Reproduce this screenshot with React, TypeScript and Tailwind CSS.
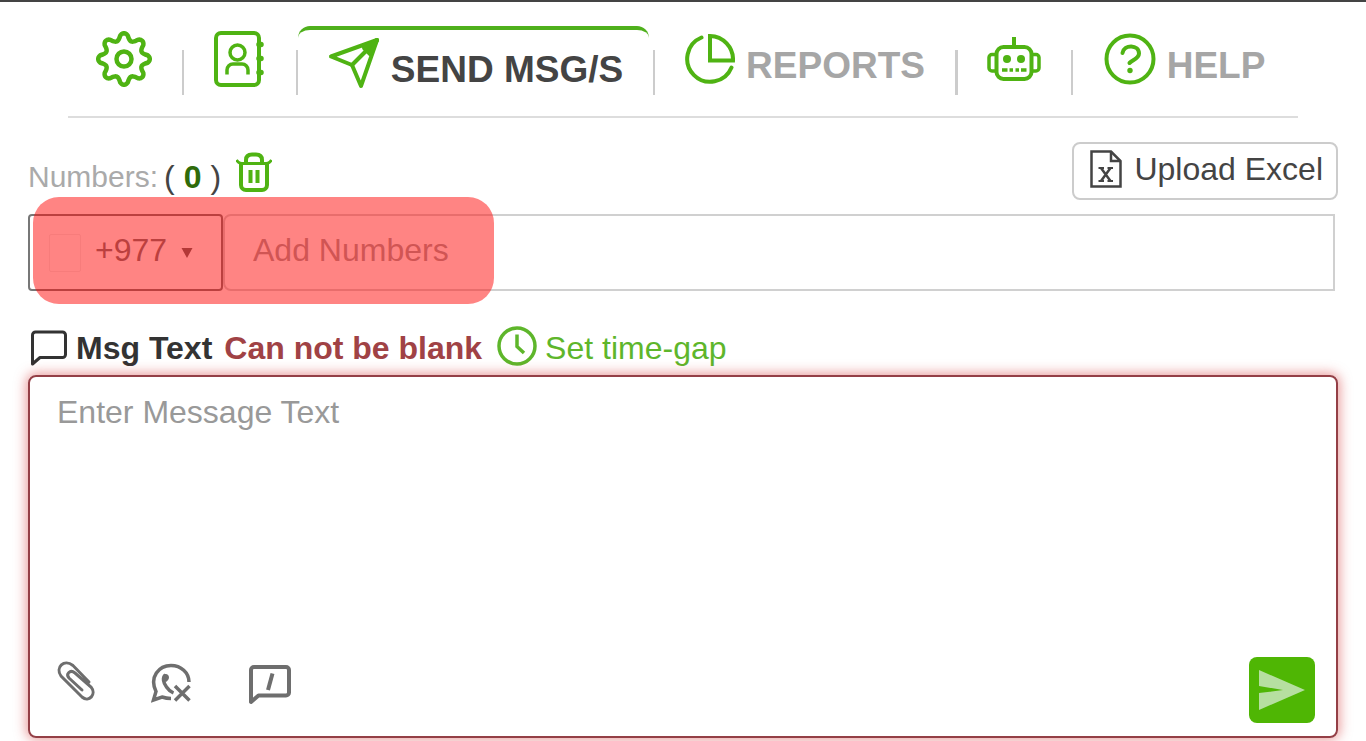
import { useState } from 'react';
import type { ReactNode } from 'react';

// eight rounded teeth around the centre of a 56x56 box
const gearPath = (() => {
  const points: string[] = [];
  for (let deg = 0; deg < 360; deg += 3) {
    const a = (deg * Math.PI) / 180;
    const wave = Math.cos(8 * a);
    const r = 22.4 + 3.4 * Math.sign(wave) * Math.pow(Math.abs(wave), 0.7);
    points.push(`${(28 + r * Math.sin(a)).toFixed(2)} ${(28 - r * Math.cos(a)).toFixed(2)}`);
  }
  return `M${points.join('L')}Z`;
})();

function GearIcon() {
  return (
    <svg className="h-14 w-14" viewBox="0 0 56 56" fill="none" stroke="currentColor" strokeWidth="4.5" strokeLinejoin="round">
      <path d={gearPath} />
      <circle cx="28" cy="28" r="7.5" />
    </svg>
  );
}

function ContactsIcon() {
  return (
    <svg className="h-14 w-[50px]" viewBox="0 0 50 56" fill="none" stroke="currentColor" strokeWidth="4">
      <rect x="2" y="2" width="43" height="52" rx="5" />
      <circle cx="23.500" cy="21.500" r="7.5" strokeWidth="3.5" />
      <path d="M13 43.500V39a6 6 0 0 1 6-6h9a6 6 0 0 1 6 6v4.500" strokeWidth="3.5" />
      <path d="M45 13.500h2M45 27.500h2M45 41.500h2" strokeWidth="5.500" strokeLinecap="round" />
    </svg>
  );
}

function PlaneIcon() {
  return (
    <svg className="h-[52px] w-[52px]" viewBox="0 0 52 52" fill="none" stroke="currentColor" strokeWidth="4" strokeLinejoin="round" strokeLinecap="round">
      <path d="M49 3L3 19.500L24 28L33 49Z" />
      <path d="M49 3L24 28" />
      <path d="M49 3L36 11L42 17Z" fill="currentColor" />
    </svg>
  );
}

function ReportsIcon() {
  return (
    <svg className="h-[52px] w-[52px]" viewBox="0 0 52 52" fill="none" stroke="currentColor" strokeWidth="4" strokeLinecap="round">
      <path d="M18.500 4.500A23 23 0 1 0 48.500 34.500" />
      <path d="M27 3A23.500 23.500 0 0 1 50 27.500H27Z" strokeLinejoin="miter" />
    </svg>
  );
}

function RobotIcon() {
  return (
    <svg className="h-[46px] w-[54px]" viewBox="0 0 54 46" fill="none" stroke="currentColor" strokeWidth="4">
      <path d="M27 1v9" strokeWidth="4" />
      <rect x="9.500" y="11" width="35" height="32" rx="7" />
      <path d="M9 18.500H5a3 3 0 0 0-3 3V32a3 3 0 0 0 3 3h4M45 18.500h4a3 3 0 0 1 3 3V32a3 3 0 0 1-3 3h-4" strokeWidth="3.5" />
      <g fill="currentColor" stroke="none">
        <circle cx="20" cy="23" r="4" />
        <circle cx="34" cy="23" r="4" />
      </g>
      <path d="M15 34h5.500M22.500 34h3.500M28.500 34h3.500M34 34h5.500" strokeWidth="3.500" />
    </svg>
  );
}

function HelpIcon() {
  return (
    <svg className="h-[52px] w-[52px]" viewBox="0 0 52 52" fill="none" stroke="currentColor" strokeWidth="4">
      <circle cx="26" cy="26" r="23.500" />
      <path d="M18.500 20C20 11 35 11.500 35 20.500C35 25.500 29 26.500 25.500 30" strokeLinecap="round" />
      <circle cx="26" cy="37.500" r="2.700" fill="currentColor" stroke="none" />
    </svg>
  );
}

function TrashIcon() {
  return (
    <svg className="h-10 w-9" viewBox="0 0 36 40" fill="none" stroke="currentColor" strokeWidth="4">
      <path d="M0.500 8C3 11.500 5 11.500 8 11.500H28C31 11.500 33 11.500 35.500 8" strokeWidth="3" />
      <path d="M10 10V8C10 4 12.500 2.500 16 2.500H20C23.500 2.500 26 4 26 8V10" />
      <path d="M5 12v21a5 5 0 0 0 5 5h16a5 5 0 0 0 5-5V12" />
      <path d="M14.500 18v13M21.500 18v13" strokeWidth="4" />
    </svg>
  );
}

function ExcelIcon() {
  return (
    <svg className="h-[38px] w-8" viewBox="0 0 32 38" fill="none" stroke="currentColor" strokeWidth="2.500">
      <path d="M1.500 1.500H21L30.500 11V36.500H1.500Z" />
      <path d="M21 1.500V11H30.500" />
      <path d="M11 18L20.500 31M20.500 18L11 31" strokeWidth="2.500" />
      <path d="M8.500 18h5.500M17.500 18h5.500M8.500 31h5.500M17.500 31h5.500" strokeWidth="2" />
    </svg>
  );
}

function BubbleIcon() {
  return (
    <svg className="h-9 w-9" viewBox="0 0 36 36" fill="none" stroke="currentColor" strokeWidth="3" strokeLinejoin="round">
      <path d="M1.500 34V5a3 3 0 0 1 3-3h27a3 3 0 0 1 3 3v19.500a3 3 0 0 1-3 3H9Z" />
    </svg>
  );
}

function ClockIcon() {
  return (
    <svg className="h-10 w-10" viewBox="0 0 40 40" fill="none" stroke="currentColor" strokeWidth="3.500">
      <circle cx="20" cy="20" r="18" />
      <path d="M20 8.500V20.500L27 27" />
    </svg>
  );
}

function ClipIcon() {
  return (
    <svg className="h-10 w-[38px]" viewBox="0 0 38 40" fill="none" stroke="currentColor" strokeWidth="3" strokeLinecap="round">
      <path d="M32 21L16 4.500C7 -2.500 -2 6.500 4 15L25 36C32 42 40 33 34 26L18 12C13 8 8.500 13 12 17L25 29" />
    </svg>
  );
}

function WhatsappOffIcon() {
  return (
    <svg className="h-10 w-10" viewBox="0 0 40 40" fill="none" stroke="currentColor" strokeWidth="3.500">
      <path d="M20 35.500C16.500 35.500 14 35 11 34L2.500 37L5 28.500C-2 14 8 2.500 20 2.500C30 2.500 38 9.500 38 19" />
      <path d="M14.500 12C11 14.500 12.500 20 15.500 24C17.500 27 20 29 22.500 30" />
      <path d="M12.500 12.500C14 9.500 18 11 18 14.500C18 16 16.500 18 15 19L12.500 18Z" fill="currentColor" stroke="none" />
      <path d="M24 23L38.500 37.500M38.500 23L24 37.500" />
    </svg>
  );
}

function CommandIcon() {
  return (
    <svg className="h-10 w-[42px]" viewBox="0 0 42 40" fill="none" stroke="currentColor" strokeWidth="4" strokeLinejoin="round">
      <path d="M2 37V5a3 3 0 0 1 3-3h32a3 3 0 0 1 3 3v22.500a3 3 0 0 1-3 3H9.500Z" />
      <path d="M23.500 8.500L19 25" />
    </svg>
  );
}

const tabs: { id: string; name: string; icon: ReactNode; label?: string }[] = [
  { id: 'settings', name: 'Settings', icon: <GearIcon /> },
  { id: 'contacts', name: 'Contacts', icon: <ContactsIcon /> },
  { id: 'send', name: 'Send messages', icon: <PlaneIcon />, label: 'SEND MSG/S' },
  { id: 'reports', name: 'Reports', icon: <ReportsIcon />, label: 'REPORTS' },
  { id: 'bot', name: 'Bot', icon: <RobotIcon /> },
  { id: 'help', name: 'Help', icon: <HelpIcon />, label: 'HELP' },
];

function NavTabs() {
  const [active, setActive] = useState('send');

  return (
    <nav className="mx-[68px] border-b-2 border-[#dddddd] pt-6 pb-[21px]">
      <ul className="grid grid-cols-[116fr_114fr_357fr_303fr_115fr_225fr]">
        {tabs.map((tab, i) => (
          <li key={tab.id} className="flex h-[69px] items-end">
            <a
              href={`#${tab.id}`}
              aria-label={tab.name}
              onClick={() => setActive(tab.id)}
              className={`flex h-full flex-1 items-start justify-center gap-[11px] pt-[5px] ${
                active === tab.id ? 'mr-1 rounded-t-xl border-t-4 border-[#4fb01c] pl-1 text-[#444444]' : 'pr-[2px] text-[#a6a6a6]'
              }`}
            >
              <span className="flex h-14 items-center text-[#4fb313]">{tab.icon}</span>
              {tab.label && <span className="mt-[7px] text-[37px] leading-[56px] font-bold whitespace-nowrap">{tab.label}</span>}
            </a>
            {i < tabs.length - 1 && (
              <span className={`h-[45px] bg-[#cccccc] ${tab.id === 'reports' ? 'w-[3px]' : 'w-[2px]'}`} />
            )}
          </li>
        ))}
      </ul>
    </nav>
  );
}

export default function App() {
  const [numbers, setNumbers] = useState('');
  const [message, setMessage] = useState('');
  const [code, setCode] = useState('+977');

  return (
    <div className="flex min-h-screen flex-col border-t-2 border-[#444444] bg-white font-['Liberation_Sans',Arial,sans-serif]">
      <NavTabs />

      <main className="flex flex-1 flex-col px-7 pt-6 pb-[3px]">
        <div className="flex items-center justify-between">
          <div className="flex items-center">
            <label htmlFor="numbers" className="mt-3 text-[30px] leading-10 text-[#aaaaaa]">Numbers:</label>
            <p className="mt-3 ml-[6px] flex gap-[9px] text-[32px] leading-10 text-[#444444]">
              <span>(</span>
              <b className="text-[#2f6b0a]">0</b>
              <span>)</span>
            </p>
            <button type="button" aria-label="Clear numbers" className="mt-[2px] ml-[15px] text-[#4fb313]">
              <TrashIcon />
            </button>
          </div>
          <button
            type="button"
            className="flex h-[58px] items-center gap-3 rounded-lg border-2 border-[#cccccc] px-4 pr-[13px] pb-1 text-[32px] leading-10 text-[#444444]"
          >
            <ExcelIcon />
            Upload Excel
          </button>
        </div>

        <div className="relative mt-[14px] mr-[3px] flex h-[77px]">
          <div className="flex w-[195px] items-center rounded border-2 border-[#777777] pl-[19px]">
            <span className="h-[38px] w-8 rounded-xs border border-[#eeeeee]" />
            <select
              aria-label="Country code"
              value={code}
              onChange={(e) => setCode(e.target.value)}
              className="ml-[14px] w-[86px] appearance-none bg-transparent pb-[6px] text-[32px] leading-10 text-[#777777] outline-none"
            >
              <option>+977</option>
              <option>+91</option>
              <option>+1</option>
            </select>
            <svg className="h-[10px] w-3 text-[#666666]" viewBox="0 0 12 10" fill="currentColor">
              <path d="M0.500 0H11.500L6 10Z" />
            </svg>
          </div>
          <input
            id="numbers"
            type="text"
            value={numbers}
            onChange={(e) => setNumbers(e.target.value)}
            placeholder="Add Numbers"
            className="min-w-0 flex-1 rounded-l-lg border-2 border-[#d0d0d0] pb-[6px] pl-7 text-[32px] leading-10 outline-none placeholder:text-[#a0a0a0]"
          />
          {/* highlight over the number field */}
          <div className="pointer-events-none absolute -top-[17px] left-[5px] h-[107px] w-[461px] rounded-[26px] bg-[rgba(255,10,8,0.5)]" />
        </div>

        <div className="mt-[34px] flex h-[50px] items-center pb-1 pl-[3px] text-[32px] leading-10 whitespace-nowrap">
          <label htmlFor="message" className="flex items-center gap-[9px] font-bold text-[#333333]">
            <BubbleIcon />
            Msg Text
          </label>
          <strong className="ml-3 text-[#a04245]">Can not be blank</strong>
          <button type="button" className="ml-[15px] flex items-start gap-2 pb-[2px] text-[#5eb62b]">
            <ClockIcon />
            <span className="pt-[2px]">Set time-gap</span>
          </button>
        </div>

        <form
          onSubmit={(e) => e.preventDefault()}
          className="flex flex-1 flex-col rounded-lg border-2 border-[#943f46] shadow-[0_0_12px_2px_rgba(215,60,60,0.5)]"
        >
          <textarea
            id="message"
            value={message}
            onChange={(e) => setMessage(e.target.value)}
            placeholder="Enter Message Text"
            className="min-h-40 w-full flex-1 resize-none px-[27px] pt-[15px] text-[32px] leading-10 outline-none placeholder:text-[#999999]"
          />
          <div className="flex items-start pr-[21px] pb-[13px] pl-[27px] text-[#6e6e6e]">
            <button type="button" aria-label="Attach file" className="mt-1">
              <ClipIcon />
            </button>
            <button type="button" aria-label="WhatsApp off" className="mt-[6px] ml-14">
              <WhatsappOffIcon />
            </button>
            <button type="button" aria-label="Message template" className="mt-2 ml-[58px]">
              <CommandIcon />
            </button>
            <button type="submit" aria-label="Send" className="ml-auto flex h-[66px] w-[66px] items-center justify-center rounded-lg bg-[#4fb604]">
              <svg className="h-10 w-[46px]" viewBox="0 0 46 40" fill="#b6dfa0">
                <path d="M0 0L46 20L0 40V23L24 20L0 16Z" />
              </svg>
            </button>
          </div>
        </form>
      </main>
    </div>
  );
}
